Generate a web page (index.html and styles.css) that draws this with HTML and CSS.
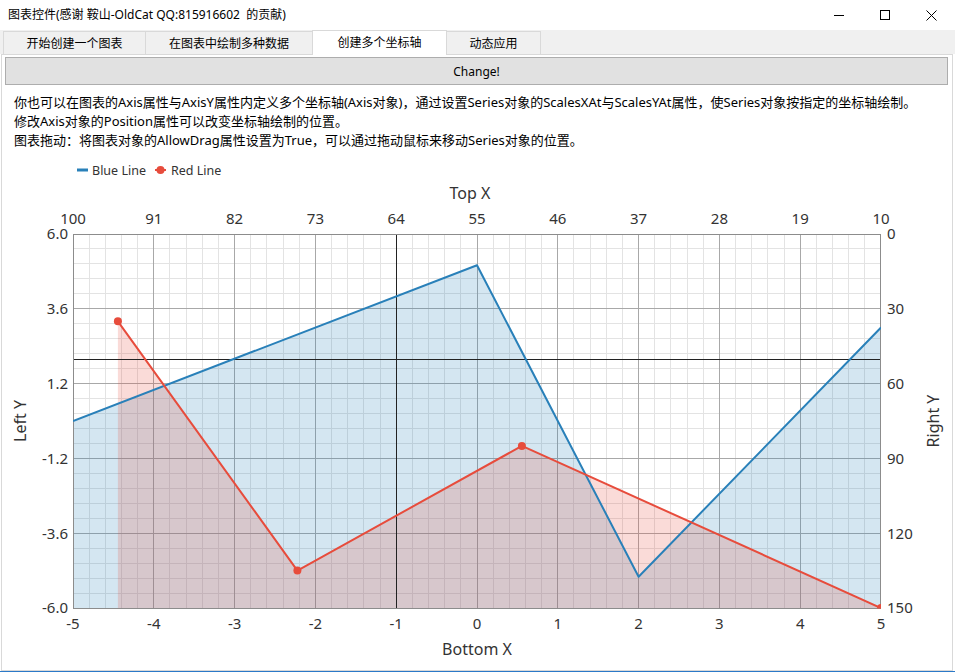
FILE: index.html
```html
<!DOCTYPE html>
<html lang="zh-CN">
<head>
<meta charset="utf-8">
<title>图表控件</title>
<link rel="stylesheet" href="styles.css">
</head>
<body>
<div class="window">
  <div class="titlebar">
    <span class="title">图表控件(感谢 鞍山-OldCat QQ:815916602&nbsp; 的贡献)</span>
    <div class="controls">
      <span class="ctl"><svg width="10" height="10" viewBox="0 0 10 10"><path d="M0 5.5H10" stroke="#000" stroke-width="1"/></svg></span>
      <span class="ctl"><svg width="10" height="10" viewBox="0 0 10 10"><rect x="0.5" y="0.5" width="9" height="9" fill="none" stroke="#000" stroke-width="1"/></svg></span>
      <span class="ctl"><svg width="11" height="11" viewBox="0 0 11 11"><path d="M0.5 0.5L10.5 10.5M10.5 0.5L0.5 10.5" stroke="#000" stroke-width="1"/></svg></span>
    </div>
  </div>
  <div class="tabs">
    <div class="tab t1">开始创建一个图表</div>
    <div class="tab t2">在图表中绘制多种数据</div>
    <div class="tab t3 active">创建多个坐标轴</div>
    <div class="tab t4">动态应用</div>
  </div>
  <div class="panel">
    <button class="btn">Change!</button>
    <div class="desc">
      <p>你也可以在图表的Axis属性与AxisY属性内定义多个坐标轴(Axis对象)，通过设置Series对象的ScalesXAt与ScalesYAt属性，使Series对象按指定的坐标轴绘制。</p>
      <p>修改Axis对象的Position属性可以改变坐标轴绘制的位置。</p>
      <p>图表拖动：将图表对象的AllowDrag属性设置为True，可以通过拖动鼠标来移动Series对象的位置。</p>
    </div>
    <svg class="chart" width="950" height="520" viewBox="2 150 950 520">
      <defs>
        <clipPath id="plotclip"><rect x="73" y="234" width="808" height="374.5"/></clipPath>
      </defs>
      <!-- legend -->
      <line x1="77" y1="170" x2="88" y2="170" stroke="#2980b9" stroke-width="3"/>
      <text class="legend" x="92" y="174.5">Blue Line</text>
      <line x1="155" y1="170" x2="166" y2="170" stroke="#e74c3c" stroke-width="2"/>
      <circle cx="160.5" cy="170" r="4" fill="#e74c3c"/>
      <text class="legend" x="171" y="174.5">Red Line</text>

      <!-- grid -->
      <path class="minor" d="M89.5 234V608M105.5 234V608M121.5 234V608M137.5 234V608M169.5 234V608M186.5 234V608M202.5 234V608M218.5 234V608M250.5 234V608M266.5 234V608M283.5 234V608M299.5 234V608M331.5 234V608M347.5 234V608M363.5 234V608M380.5 234V608M412.5 234V608M428.5 234V608M444.5 234V608M460.5 234V608M493.5 234V608M509.5 234V608M525.5 234V608M541.5 234V608M573.5 234V608M590.5 234V608M606.5 234V608M622.5 234V608M654.5 234V608M670.5 234V608M687.5 234V608M703.5 234V608M735.5 234V608M751.5 234V608M767.5 234V608M784.5 234V608M816.5 234V608M832.5 234V608M848.5 234V608M864.5 234V608"/>
      <path class="minor" d="M73 248.5H881M73 263.5H881M73 278.5H881M73 293.5H881M73 323.5H881M73 338.5H881M73 353.5H881M73 368.5H881M73 398.5H881M73 413.5H881M73 428.5H881M73 443.5H881M73 473.5H881M73 488.5H881M73 503.5H881M73 518.5H881M73 548.5H881M73 563.5H881M73 578.5H881M73 593.5H881"/>
      <path class="major" d="M153.5 234V608M234.5 234V608M315.5 234V608M477.5 234V608M557.5 234V608M638.5 234V608M719.5 234V608M800.5 234V608M73 308.5H881M73 383.5H881M73 458.5H881M73 533.5H881"/>

      <!-- fills -->
      <g clip-path="url(#plotclip)">
        <polygon class="bluefill" points="73,421 477,265.2 638.6,576.8 881,327.5 881,609 73,609"/>
        <polygon class="redfill" points="117.9,609 117.9,321.3 297.4,570.6 521.9,445.9 881,608 881,609"/>
      </g>

      <!-- cross lines -->
      <path class="cross" d="M73 359.5H881M396.5 234V608"/>

      <!-- plot border -->
      <rect class="border" x="73.5" y="234.5" width="807" height="374"/>

      <!-- series lines -->
      <g clip-path="url(#plotclip)">
        <polyline class="blueline" points="73,421 477,265.2 638.6,576.8 881,327.5"/>
        <polyline class="redline" points="117.9,321.3 297.4,570.6 521.9,445.9 881,608"/>
        <circle cx="117.9" cy="321.3" r="4" fill="#e74c3c"/>
        <circle cx="297.4" cy="570.6" r="4" fill="#e74c3c"/>
        <circle cx="521.9" cy="445.9" r="4" fill="#e74c3c"/>
        <circle cx="881" cy="608" r="4" fill="#e74c3c"/>
      </g>

      <!-- top axis -->
      <text class="axtitle" x="470" y="199">Top X</text>
      <g class="tick mid">
        <text x="73" y="224">100</text>
        <text x="153.8" y="224">91</text>
        <text x="234.6" y="224">82</text>
        <text x="315.4" y="224">73</text>
        <text x="396.2" y="224">64</text>
        <text x="477" y="224">55</text>
        <text x="557.8" y="224">46</text>
        <text x="638.6" y="224">37</text>
        <text x="719.4" y="224">28</text>
        <text x="800.2" y="224">19</text>
        <text x="881" y="224">10</text>
      </g>
      <!-- bottom axis -->
      <g class="tick mid">
        <text x="73" y="629">-5</text>
        <text x="153.8" y="629">-4</text>
        <text x="234.6" y="629">-3</text>
        <text x="315.4" y="629">-2</text>
        <text x="396.2" y="629">-1</text>
        <text x="477" y="629">0</text>
        <text x="557.8" y="629">1</text>
        <text x="638.6" y="629">2</text>
        <text x="719.4" y="629">3</text>
        <text x="800.2" y="629">4</text>
        <text x="881" y="629">5</text>
      </g>
      <text class="axtitle" x="477" y="655">Bottom X</text>
      <!-- left axis -->
      <g class="tick end">
        <text x="68" y="239.4">6.0</text>
        <text x="68" y="314.2">3.6</text>
        <text x="68" y="389">1.2</text>
        <text x="68" y="463.8">-1.2</text>
        <text x="68" y="538.6">-3.6</text>
        <text x="68" y="613.4">-6.0</text>
      </g>
      <text class="axtitle" transform="translate(20 421) rotate(-90)" x="0" y="5.7">Left Y</text>
      <!-- right axis -->
      <g class="tick start">
        <text x="887" y="239.4">0</text>
        <text x="887" y="314.2">30</text>
        <text x="887" y="389">60</text>
        <text x="887" y="463.8">90</text>
        <text x="887" y="538.6">120</text>
        <text x="887" y="613.4">150</text>
      </g>
      <text class="axtitle" transform="translate(933 421) rotate(-90)" x="0" y="5.7">Right Y</text>
    </svg>
  </div>
</div>
</body>
</html>
```
FILE: styles.css
```css
html, body {
  margin: 0;
  padding: 0;
  background: #ffffff;
}

body {
  font-family: "Noto Sans", "Noto Sans CJK SC", sans-serif;
  color: #000;
}

.window {
  width: 955px;
  height: 672px;
  box-sizing: border-box;
  border-bottom: 1px solid #2b79c8;
  background: #fff;
  overflow: hidden;
}

.titlebar {
  height: 30px;
  display: flex;
  align-items: center;
  justify-content: space-between;
  background: #fff;
}

.title {
  font-size: 12px;
  padding-left: 8px;
  line-height: 30px;
  white-space: nowrap;
}

.controls {
  display: flex;
  height: 30px;
  margin-right: 1px;
}

.ctl {
  width: 46px;
  height: 30px;
  display: flex;
  align-items: center;
  justify-content: center;
}

.ctl svg {
  display: block;
}

.tabs {
  height: 24px;
  background: #f0f0f0;
  display: flex;
  align-items: flex-end;
  padding-left: 3px;
}

.tab {
  box-sizing: border-box;
  height: 23px;
  border: 1px solid #d9d9d9;
  border-bottom: none;
  margin-left: -1px;
  background: #f0f0f0;
  font-size: 12px;
  display: flex;
  align-items: center;
  justify-content: center;
  white-space: nowrap;
}

.t1 { margin-left: 0; width: 143px; }
.t2 { width: 168px; }
.t3 { width: 135px; }
.t4 { width: 95px; }

.tab.active {
  height: 25px;
  margin-bottom: -1px;
  background: #fff;
  position: relative;
  z-index: 1;
  padding-bottom: 2px;
}

.panel {
  box-sizing: border-box;
  width: 952px;
  height: 617px;
  margin-left: 1px;
  border: 1px solid #d9d9d9;
  background: #fff;
}

.btn {
  display: block;
  box-sizing: border-box;
  margin: 2px 0 0 3px;
  width: 943px;
  height: 28px;
  padding: 0;
  background: #e1e1e1;
  border: 1px solid #adadad;
  font-family: "Noto Sans", "Noto Sans CJK SC", sans-serif;
  font-size: 12px;
  color: #000;
}

.desc {
  margin-top: 8px;
  padding-left: 12px;
  font-size: 13px;
  line-height: 19px;
  height: 57px;
  white-space: nowrap;
}

.desc p {
  margin: 0;
}

.chart {
  display: block;
}

.chart text {
  font-family: "Noto Sans", "Open Sans", sans-serif;
  fill: #333;
}

.legend {
  font-size: 12.5px;
}

.tick text {
  font-size: 15px;
}

.tick.mid text { text-anchor: middle; }
.tick.end text { text-anchor: end; }
.tick.start text { text-anchor: start; }

.axtitle {
  font-size: 16px;
  text-anchor: middle;
}

.minor {
  stroke: #e3e3e3;
  stroke-width: 1;
  fill: none;
}

.major {
  stroke: #a8a8a8;
  stroke-width: 1;
  fill: none;
}

.cross {
  stroke: #222;
  stroke-width: 1;
  fill: none;
}

.border {
  fill: none;
  stroke: #8c8c8c;
  stroke-width: 1;
}

.bluefill {
  fill: rgba(41, 128, 185, 0.2);
}

.redfill {
  fill: rgba(231, 76, 60, 0.2);
}

.blueline {
  fill: none;
  stroke: #2980b9;
  stroke-width: 2;
  stroke-linejoin: round;
}

.redline {
  fill: none;
  stroke: #e74c3c;
  stroke-width: 2;
  stroke-linejoin: round;
}
```
